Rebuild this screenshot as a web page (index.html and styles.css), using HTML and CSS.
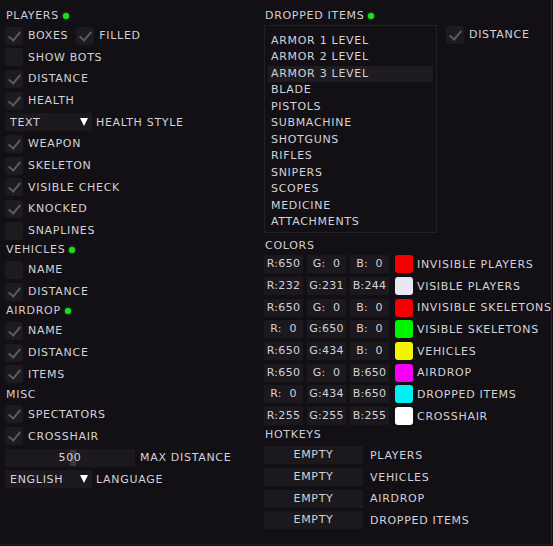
FILE: index.html
```html
<!DOCTYPE html>
<html>
    <head>
        <meta charset="utf-8">
        <link rel="stylesheet" href="styles.css">
    </head>
    <body>
        <div id="menu">
            <div class="column left">
                <div class="header">PLAYERS <span class="dot"></span></div>
                <div class="row">
                    <span class="check on"></span><span class="label">BOXES</span>
                    <span class="check on"></span><span class="label">FILLED</span>
                </div>
                <div class="row"><span class="check"></span><span class="label">SHOW BOTS</span></div>
                <div class="row"><span class="check on"></span><span class="label">DISTANCE</span></div>
                <div class="row"><span class="check on"></span><span class="label">HEALTH</span></div>
                <div class="row">
                    <span class="combo"><span>TEXT</span><span class="arrow"></span></span>
                    <span class="label">HEALTH STYLE</span>
                </div>
                <div class="row"><span class="check on"></span><span class="label">WEAPON</span></div>
                <div class="row"><span class="check on"></span><span class="label">SKELETON</span></div>
                <div class="row"><span class="check on"></span><span class="label">VISIBLE CHECK</span></div>
                <div class="row"><span class="check on"></span><span class="label">KNOCKED</span></div>
                <div class="row"><span class="check"></span><span class="label">SNAPLINES</span></div>

                <div class="header">VEHICLES <span class="dot"></span></div>
                <div class="row"><span class="check"></span><span class="label">NAME</span></div>
                <div class="row"><span class="check on"></span><span class="label">DISTANCE</span></div>

                <div class="header">AIRDROP <span class="dot"></span></div>
                <div class="row"><span class="check on"></span><span class="label">NAME</span></div>
                <div class="row"><span class="check on"></span><span class="label">DISTANCE</span></div>
                <div class="row"><span class="check on"></span><span class="label">ITEMS</span></div>

                <div class="header misc">MISC</div>
                <div class="row"><span class="check on"></span><span class="label">SPECTATORS</span></div>
                <div class="row"><span class="check on"></span><span class="label">CROSSHAIR</span></div>
                <div class="row">
                    <span class="slider"><span class="grab"></span><span class="value">500</span></span>
                    <span class="label">MAX DISTANCE</span>
                </div>
                <div class="row">
                    <span class="combo"><span>ENGLISH</span><span class="arrow"></span></span>
                    <span class="label">LANGUAGE</span>
                </div>
            </div>

            <div class="column right">
                <div class="header">DROPPED ITEMS <span class="dot"></span></div>
                <div class="dropped">
                    <div class="listbox">
                        <div class="item">ARMOR 1 LEVEL</div>
                        <div class="item">ARMOR 2 LEVEL</div>
                        <div class="item selected">ARMOR 3 LEVEL</div>
                        <div class="item">BLADE</div>
                        <div class="item">PISTOLS</div>
                        <div class="item">SUBMACHINE</div>
                        <div class="item">SHOTGUNS</div>
                        <div class="item">RIFLES</div>
                        <div class="item">SNIPERS</div>
                        <div class="item">SCOPES</div>
                        <div class="item">MEDICINE</div>
                        <div class="item">ATTACHMENTS</div>
                    </div>
                    <div class="row"><span class="check on"></span><span class="label">DISTANCE</span></div>
                </div>

                <div class="header colors">COLORS</div>
                <div class="row color">
                    <span class="num">R:650</span><span class="num">G:  0</span><span class="num">B:  0</span>
                    <span class="swatch" style="background: #f40000;"></span><span class="label">INVISIBLE PLAYERS</span>
                </div>
                <div class="row color">
                    <span class="num">R:232</span><span class="num">G:231</span><span class="num">B:244</span>
                    <span class="swatch" style="background: #e8e7f4;"></span><span class="label">VISIBLE PLAYERS</span>
                </div>
                <div class="row color">
                    <span class="num">R:650</span><span class="num">G:  0</span><span class="num">B:  0</span>
                    <span class="swatch" style="background: #f40000;"></span><span class="label">INVISIBLE SKELETONS</span>
                </div>
                <div class="row color">
                    <span class="num">R:  0</span><span class="num">G:650</span><span class="num">B:  0</span>
                    <span class="swatch" style="background: #00f400;"></span><span class="label">VISIBLE SKELETONS</span>
                </div>
                <div class="row color">
                    <span class="num">R:650</span><span class="num">G:434</span><span class="num">B:  0</span>
                    <span class="swatch" style="background: #f4f400;"></span><span class="label">VEHICLES</span>
                </div>
                <div class="row color">
                    <span class="num">R:650</span><span class="num">G:  0</span><span class="num">B:650</span>
                    <span class="swatch" style="background: #f400f4;"></span><span class="label">AIRDROP</span>
                </div>
                <div class="row color">
                    <span class="num">R:  0</span><span class="num">G:434</span><span class="num">B:650</span>
                    <span class="swatch" style="background: #00f0f4;"></span><span class="label">DROPPED ITEMS</span>
                </div>
                <div class="row color">
                    <span class="num">R:255</span><span class="num">G:255</span><span class="num">B:255</span>
                    <span class="swatch" style="background: #ffffff;"></span><span class="label">CROSSHAIR</span>
                </div>

                <div class="header hotkeys">HOTKEYS</div>
                <div class="row hotkey"><span class="button">EMPTY</span><span class="label">PLAYERS</span></div>
                <div class="row hotkey"><span class="button">EMPTY</span><span class="label">VEHICLES</span></div>
                <div class="row hotkey"><span class="button">EMPTY</span><span class="label">AIRDROP</span></div>
                <div class="row hotkey"><span class="button">EMPTY</span><span class="label">DROPPED ITEMS</span></div>
            </div>
        </div>
    </body>
</html>
```
FILE: styles.css
```css
body {
    margin: 0;
    background-color: #121014;
    font-family: 'DejaVu Sans', sans-serif;
    font-size: 11px;
    letter-spacing: 0.7px;
    color: #d4d2d6;
}

#menu {
    width: 552px;
    height: 545px;
    box-sizing: border-box;
    border-right: 1px solid #2a2830;
    border-bottom: 1px solid #201e24;
    display: grid;
    grid-template-columns: 259px 1fr;
    padding-top: 9px;
}

.column {
    display: flex;
    flex-direction: column;
    gap: 3.67px;
}

.left {
    padding-left: 5px;
}

.right {
    padding-left: 5px;
}

.header {
    height: 14px;
    line-height: 14px;
    padding-left: 1px;
    display: flex;
    align-items: center;
    gap: 4px;
    color: #d0ced2;
}

.misc {
    margin-top: 1px;
}

.dot {
    width: 6px;
    height: 6px;
    border-radius: 50%;
    background-color: #1fdc1f;
    box-shadow: 0 0 2px #1fdc1f;
}

.row {
    height: 18px;
    display: flex;
    align-items: center;
    white-space: pre;
}

.check {
    width: 18px;
    height: 18px;
    border-radius: 3px;
    background-color: #1d1b20;
    margin-right: 5px;
    position: relative;
}

.check.on::after {
    content: "";
    position: absolute;
    left: 6px;
    top: 2px;
    width: 5px;
    height: 10px;
    border-right: 2.5px solid #5c5a60;
    border-bottom: 2.5px solid #5c5a60;
    transform: rotate(40deg);
}

.label + .check {
    margin-left: 8px;
}

.combo {
    width: 87px;
    height: 18px;
    box-sizing: border-box;
    padding: 0 4px 0 5px;
    background-color: #1b191e;
    display: flex;
    align-items: center;
    justify-content: space-between;
    margin-right: 4px;
}

.arrow {
    width: 0;
    height: 0;
    border-left: 4px solid transparent;
    border-right: 4px solid transparent;
    border-top: 8px solid #ffffff;
}

.slider {
    width: 130px;
    height: 18px;
    background-color: #1b191e;
    position: relative;
    display: flex;
    align-items: center;
    justify-content: center;
    margin-right: 5px;
}

.slider .grab {
    position: absolute;
    left: 65px;
    top: 1px;
    width: 6px;
    height: 16px;
    background-color: #3a383e;
}

.slider .value {
    position: relative;
}

.dropped {
    display: flex;
    gap: 9px;
    align-items: flex-start;
    margin-top: -2px;
    margin-bottom: 3px;
}

.dropped .row {
    margin-top: 1px;
}

.listbox {
    width: 173px;
    height: 208px;
    box-sizing: border-box;
    border: 1px solid #222026;
    padding: 7px 3px 5px;
}

.item {
    height: 16.5px;
    line-height: 16.5px;
    padding-left: 3px;
}

.item.selected {
    background-color: #1e1c21;
}

.colors {
    margin-bottom: -1.5px;
}

.color {
    gap: 4px;
}

.num {
    width: 39px;
    height: 18px;
    line-height: 18px;
    text-align: center;
    background-color: #1b191e;
    letter-spacing: 0.3px;
}

.swatch {
    width: 18px;
    height: 18px;
    border-radius: 3px;
    margin-left: 2px;
}

.hotkeys {
    margin-top: -1px;
    margin-bottom: 1px;
}

.hotkey {
    gap: 7px;
}

.button {
    width: 99px;
    height: 18px;
    line-height: 18px;
    text-align: center;
    background-color: #1b191e;
}
```
